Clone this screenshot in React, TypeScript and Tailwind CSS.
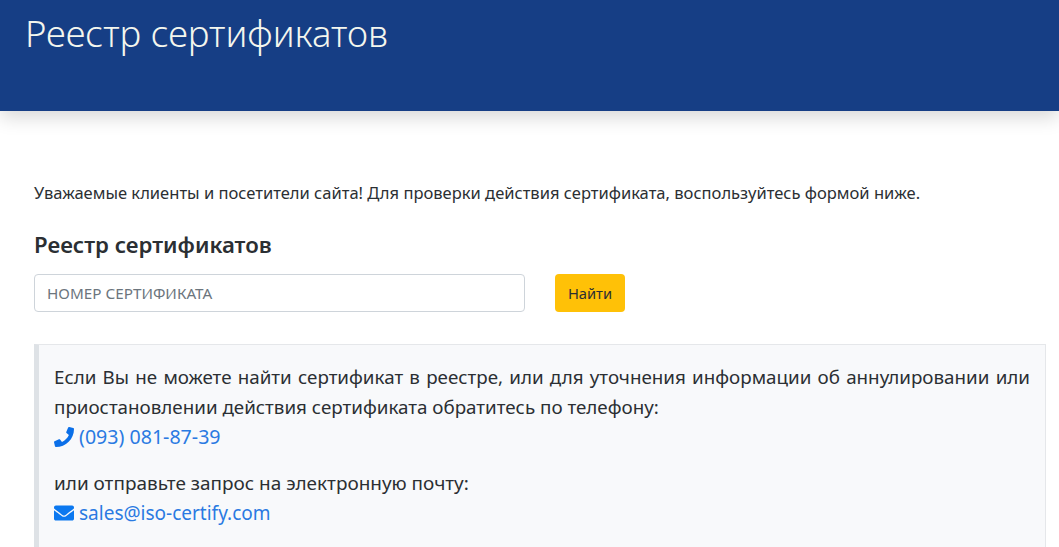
import { FaPhone, FaEnvelope } from "react-icons/fa";

export default function App() {
  return (
    <div className="h-[547px] w-[1059px] overflow-hidden bg-white font-['Noto_Sans',sans-serif] text-[#2b2f33]">
      <header className="h-[111px] bg-[#163e85] pl-[25px] pt-[9px] shadow-[0_6px_18px_rgba(0,0,0,0.16)]">
        <h1 className="text-[36.5px] font-light leading-[48px] text-[#f4f6ee]">Реестр сертификатов</h1>
      </header>
      <main className="pl-[34px] pr-[13px] pt-[70px]">
        <p className="text-[16.55px] leading-[24px]">Уважаемые клиенты и посетители сайта! Для проверки действия сертификата, воспользуйтесь формой ниже.</p>
        <h2 className="mt-[25px] text-[22.2px] font-semibold leading-[30px]">Реестр сертификатов</h2>
        <div className="mt-[14px] flex gap-[30px]">
          <input
            placeholder="НОМЕР СЕРТИФИКАТА"
            className="h-[38px] w-[491px] rounded border border-[#ced4da] px-3 text-[15.25px] placeholder:text-[#6c757d]"
          />
          <button className="h-[38px] w-[70px] rounded bg-[#ffc107] text-[14.7px]">Найти</button>
        </div>
        <section className="mt-[32px] border border-l-[5px] border-[#e5e7ea] border-l-[#dee2e6] bg-[#f8f9fb] px-[15px] pb-6 pt-[17px] text-[18.8px] leading-[30px]">
          <p className="text-justify">Если Вы не можете найти сертификат в реестре, или для уточнения информации об аннулировании или приостановлении действия сертификата обратитесь по телефону:</p>
          <p className="flex items-center gap-[5px] text-[19.6px] text-[#2a7ae2]"><FaPhone className="size-[20px] text-[#0b6fe8]" />(093) 081-87-39</p>
          <p className="mt-[16px] text-[18.95px]">или отправьте запрос на электронную почту:</p>
          <p className="flex items-center gap-[5px] text-[19px] text-[#2a7ae2]"><FaEnvelope className="size-[20px] text-[#0b78f0]" />sales@iso-certify.com</p>
        </section>
      </main>
    </div>
  );
}
